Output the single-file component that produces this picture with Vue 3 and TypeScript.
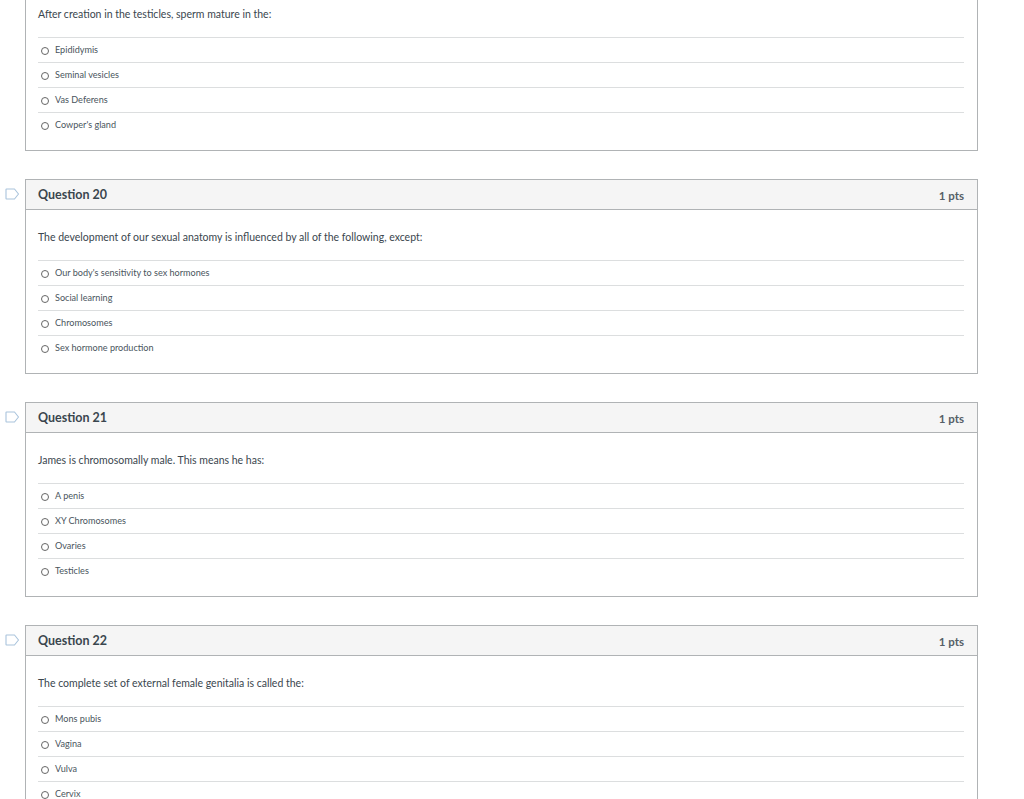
<script setup lang="ts">
interface Question {
  id: number
  text: string
  answers: string[]
}
const questions: Question[] = [
  { id: 19, text: 'After creation in the testicles, sperm mature in the:', answers: ['Epididymis', 'Seminal vesicles', 'Vas Deferens', "Cowper's gland"] },
  { id: 20, text: 'The development of our sexual anatomy is influenced by all of the following, except:', answers: ["Our body's sensitivity to sex hormones", 'Social learning', 'Chromosomes', 'Sex hormone production'] },
  { id: 21, text: 'James is chromosomally male. This means he has:', answers: ['A penis', 'XY Chromosomes', 'Ovaries', 'Testicles'] },
  { id: 22, text: 'The complete set of external female genitalia is called the:', answers: ['Mons pubis', 'Vagina', 'Vulva', 'Cervix'] }
]
</script>

<template>
  <div class="page">
    <div class="list">
      <section v-for="(q, i) in questions" :key="q.id" class="question" :class="{ first: i === 0 }">
        <template v-if="i > 0">
          <svg class="flag" width="15" height="12" viewBox="0 0 15 12" aria-hidden="true">
            <path d="M1.5 1H9.5L13.5 6L9.5 11H1.5Q1 11 1 10.5V1.5Q1 1 1.5 1Z" fill="none" stroke="#a9c3dc" stroke-width="1.1" stroke-linejoin="round" />
          </svg>
          <header class="head">
            <h2 class="title">Question {{ q.id }}</h2>
            <span class="pts">1 pts</span>
          </header>
        </template>
        <div class="body">
          <p class="text">{{ q.text }}</p>
          <ul class="answers">
            <li v-for="a in q.answers" :key="a" class="answer">
              <span class="radio"></span>
              <span class="label">{{ a }}</span>
            </li>
          </ul>
        </div>
      </section>
    </div>
  </div>
</template>

<style>
html, body { margin: 0; background: #fff; overflow: hidden; }
</style>

<style scoped>
.page {
  height: 799px;
  overflow: hidden;
  font-family: Lato, "Liberation Sans", sans-serif;
  color: #2d3b45;
}
.list {
  display: flex;
  flex-direction: column;
  gap: 28px;
  margin: 0 46px 0 25px;
}
.question {
  position: relative;
  border: 1px solid #b0b3b5;
  height: 195px;
  box-sizing: border-box;
}
.question.first {
  border-top: 0;
  height: 151px;
}
.flag {
  position: absolute;
  left: -21px;
  top: 8px;
}
.head {
  display: flex;
  align-items: center;
  justify-content: space-between;
  height: 29px;
  padding: 0 13px 0 12px;
  background: #f5f5f5;
  border-bottom: 1px solid #b0b3b5;
}
.title {
  margin: 0 0 1px;
  font-size: 12.5px;
  font-weight: 700;
  color: #3a464e;
}
.pts {
  font-size: 11.5px;
  font-weight: 700;
  color: #555f67;
  margin-top: 1px;
}
.body {
  padding: 0 13px 0 12px;
}
.text {
  margin: 0;
  padding-top: 19px;
  height: 50px;
  box-sizing: border-box;
  font-size: 10.5px;
  line-height: 16px;
  color: #3a464e;
}
.first .text {
  padding-top: 6px;
  height: 37px;
}
.answers {
  list-style: none;
  margin: 0;
  padding: 0;
}
.answer {
  display: flex;
  align-items: center;
  height: 25px;
  box-sizing: border-box;
  border-top: 1px solid #dcdedf;
  padding-left: 3px;
  font-size: 9.1px;
  color: #4a555d;
}
.radio {
  width: 6px;
  height: 6px;
  border: 1px solid #666;
  border-radius: 50%;
  margin-right: 6px;
  margin-top: 2px;
}
.label {
  line-height: 12px;
}
</style>
